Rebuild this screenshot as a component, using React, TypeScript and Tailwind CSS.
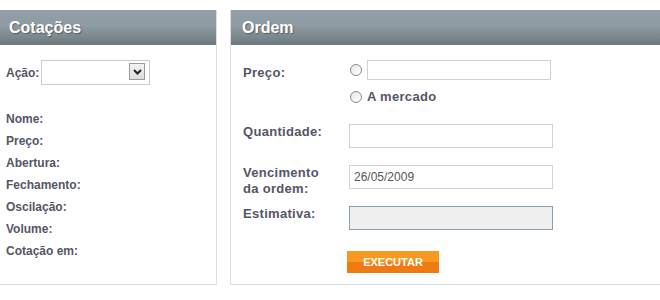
import React from "react";

const font = { fontFamily: '"Liberation Sans", Arial, sans-serif' };

function Header({ title, pl }: { title: string; pl: string }) {
  return (
    <div
      className={`h-[35px] ${pl} flex items-center text-[16px] font-bold text-white bg-[linear-gradient(to_bottom,#939fa6_0%,#8f9ba2_45%,#7c898f_75%,#6b777d_100%)] [text-shadow:1px_1px_1px_rgba(0,0,0,0.35)]`}
    >
      {title}
    </div>
  );
}

function Radio() {
  return (
    <span className="block w-[12px] h-[12px] rounded-full border border-[#8a8a8a] bg-[linear-gradient(135deg,#e6e6e6,#ffffff)] shrink-0" />
  );
}

export default function App() {
  const leftLabels = ["Nome:", "Preço:", "Abertura:", "Fechamento:", "Oscilação:", "Volume:", "Cotação em:"];
  return (
    <div className="w-[660px] h-[300px] bg-white overflow-hidden pt-[10px] flex gap-[13px] text-[#555566]" style={font}>
      {/* Left panel */}
      <div className="w-[217px] h-[275px] border-r border-b border-[#dedede] shrink-0">
        <Header title="Cotações" pl="pl-[9px]" />
        <div className="pl-[6px]">
          <div className="mt-[15px] flex items-center h-[25px]">
            <span className="text-[12px] font-bold w-[35px]">Ação:</span>
            <div className="w-[109px] h-[25px] border border-[#cccccc] bg-white flex items-start justify-end pt-[2px] pr-[4px]">
              <span className="w-[16px] h-[17px] border border-[#9a9a9a] bg-[linear-gradient(to_bottom,#f2f2f2,#dcdcdc)] flex items-center justify-center">
                <svg width="9" height="6" viewBox="0 0 9 6">
                  <path d="M1 1 L4.5 4.5 L8 1" stroke="#222" strokeWidth="2" fill="none" />
                </svg>
              </span>
            </div>
          </div>
          <div className="mt-[23px] flex flex-col">
            {leftLabels.map((l) => (
              <div key={l} className="text-[12px] font-bold leading-[22px]">
                {l}
              </div>
            ))}
          </div>
        </div>
      </div>

      {/* Right panel */}
      <div className="w-[440px] h-[275px] border-l border-b border-[#dedede] shrink-0">
        <Header title="Ordem" pl="pl-[11px]" />
        <div className="pl-[12px] text-[13px] font-bold tracking-[0.3px]">
          <div className="mt-[15px] flex">
            <div className="w-[106px] pt-[5px] leading-[16px]">Preço:</div>
            <div className="flex flex-col">
              <div className="flex items-center h-[20px] ml-[1px] gap-[5px]">
                <Radio />
                <div className="w-[184px] h-[20px] border border-[#d2d2d2] bg-white" />
              </div>
              <div className="mt-[9px] flex items-center h-[16px] ml-[1px] gap-[5px]">
                <Radio />
                <span className="leading-[16px]">A mercado</span>
              </div>
            </div>
          </div>

          <div className="mt-[19px] flex">
            <div className="w-[106px] leading-[16px]">Quantidade:</div>
            <div className="w-[204px] h-[24px] border border-[#d2d2d2] bg-white" />
          </div>

          <div className="mt-[17px] flex">
            <div className="w-[106px] leading-[16px]">
              Vencimento
              <br />
              da ordem:
            </div>
            <div className="w-[204px] h-[24px] border border-[#d2d2d2] bg-white flex items-center pl-[4px] text-[12px] font-normal tracking-normal text-[#555555]">
              26/05/2009
            </div>
          </div>

          <div className="mt-[9px] flex">
            <div className="w-[106px] leading-[16px]">Estimativa:</div>
            <div className="w-[204px] h-[24px] border border-[#8a9fb6] bg-[#efefef]" />
          </div>

          <div className="mt-[21px] ml-[104px]">
            <div className="w-[92px] h-[22px] bg-[linear-gradient(to_bottom,#f7981f_0%,#f7981f_50%,#f07a12_50%,#f07a12_100%)] flex items-center justify-center text-white text-[11px] font-bold tracking-normal">
              EXECUTAR
            </div>
          </div>
        </div>
      </div>
    </div>
  );
}
